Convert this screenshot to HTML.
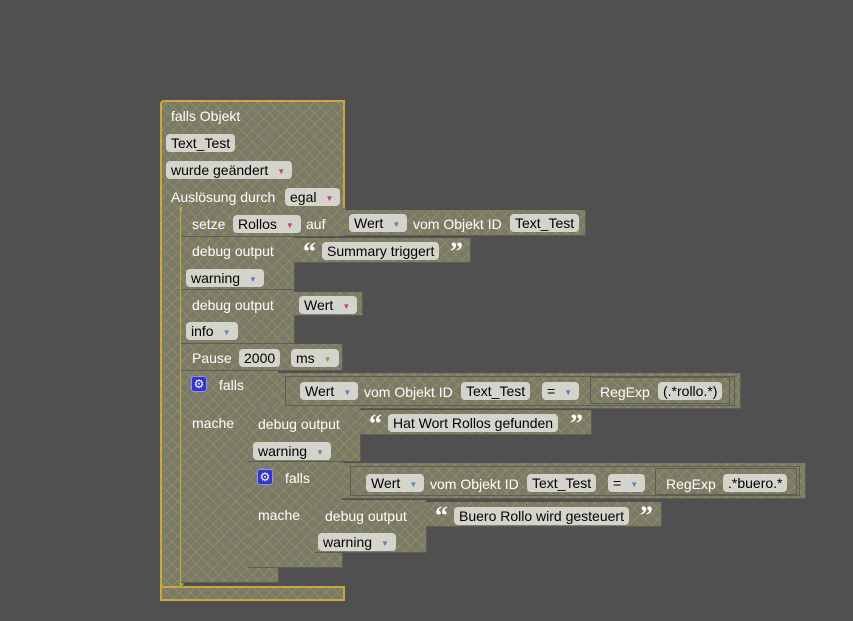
<!DOCTYPE html>
<html><head><meta charset="utf-8"><style>
body{margin:0;width:853px;height:621px;background:#505050;position:relative;overflow:hidden;font-family:"Liberation Sans",sans-serif;font-size:14px}
.b{position:absolute;background-color:#7a7a6c;background-image:repeating-linear-gradient(45deg,rgba(170,160,60,.45) 0 1px,transparent 1px 8px),repeating-linear-gradient(-45deg,rgba(170,160,60,.45) 0 1px,transparent 1px 8px);box-sizing:border-box}
.s{box-shadow:inset 0 -1px 0 #5e5d50,inset -1px 0 0 #5e5d50}
.y{border:2px solid #c9a83c}
.t{position:absolute;color:#fff;white-space:nowrap;line-height:16px}
.f{position:absolute;background:#d5d4cc;color:#000;border-radius:4px;height:18px;line-height:18px;padding:0 5px;white-space:nowrap;box-sizing:border-box}
.a{font-size:8px;margin-left:9px;margin-right:2px;vertical-align:1px}
.p{color:#c2407c}.bl{color:#5a82b8}.g{color:#8a9a40}
.q{position:absolute;color:#fff;font-size:26px;font-weight:bold;font-family:"Liberation Serif",serif;line-height:18px}
.gear{position:absolute;width:16px;height:16px;background:#3535c8;border:1px solid #9090ff;border-radius:3px;box-sizing:border-box;color:#fff;font-size:12px;line-height:14px;text-align:center}
.sl{position:absolute;border:1px solid #5e5d50;box-sizing:border-box}
</style></head><body>
<div class="b y" style="left:160px;top:100px;width:185px;height:110px;border-bottom:none;border-radius:4px 0 0 0"></div>
<div class="b y" style="left:160px;top:200px;width:22px;height:400px;border-right:none;border-top:none;border-bottom:none"></div>
<div class="b y" style="left:160px;top:586px;width:185px;height:15px;border-top-color:#c9a83c"></div>
<div class="t" style="left:171px;top:108px">falls Objekt</div>
<div class="f" style="left:166px;top:134px">Text_Test</div>
<div class="f" style="left:166px;top:161px">wurde geändert<span class="a p">▼</span></div>
<div class="t" style="left:171px;top:189px">Auslösung durch</div>
<div class="f" style="left:285px;top:188px">egal<span class="a p">▼</span></div>
<div class="b" style="left:180px;top:207px;width:4px;height:380px;border-left:2px solid #c9a83c"></div>

<div class="b s" style="left:181px;top:208px;width:165px;height:29px;border-radius:6px 0 0 0"></div>
<div class="t" style="left:192px;top:216px">setze</div>
<div class="f" style="left:233px;top:215px">Rollos<span class="a p">▼</span></div>
<div class="t" style="left:306px;top:216px">auf</div>
<div class="b s" style="left:344px;top:210px;width:242px;height:26px"></div>
<div class="f" style="left:349px;top:214px">Wert<span class="a bl">▼</span></div>
<div class="t" style="left:413px;top:216px">vom Objekt ID</div>
<div class="f" style="left:510px;top:214px">Text_Test</div>

<div class="b s" style="left:181px;top:237px;width:114px;height:53px"></div>
<div class="t" style="left:192px;top:243px">debug output</div>
<div class="b s" style="left:294px;top:238px;width:177px;height:25px"></div>
<div class="q" style="left:303px;top:243px">“</div>
<div class="f" style="left:322px;top:242px">Summary triggert</div>
<div class="q" style="left:450px;top:243px">”</div>
<div class="f" style="left:186px;top:269px">warning<span class="a bl">▼</span></div>

<div class="b s" style="left:181px;top:290px;width:114px;height:54px"></div>
<div class="t" style="left:192px;top:297px">debug output</div>
<div class="b s" style="left:294px;top:292px;width:69px;height:24px"></div>
<div class="f" style="left:299px;top:296px">Wert<span class="a p">▼</span></div>
<div class="f" style="left:186px;top:322px">info<span class="a bl">▼</span></div>

<div class="b s" style="left:181px;top:344px;width:162px;height:27px"></div>
<div class="t" style="left:192px;top:350px">Pause</div>
<div class="f" style="left:239px;top:349px">2000</div>
<div class="f" style="left:291px;top:349px">ms<span class="a g">▼</span></div>

<div class="b s" style="left:181px;top:371px;width:98px;height:212px"></div>
<div class="b s" style="left:278px;top:373px;width:463px;height:36px"></div>
<div class="sl" style="left:285px;top:376px;width:450px;height:30px"></div>
<div class="gear" style="left:191px;top:376px">⚙</div>
<div class="t" style="left:219px;top:377px">falls</div>
<div class="f" style="left:300px;top:382px">Wert<span class="a bl">▼</span></div>
<div class="t" style="left:364px;top:384px">vom Objekt ID</div>
<div class="f" style="left:461px;top:382px">Text_Test</div>
<div class="f" style="left:542px;top:382px">=<span class="a bl">▼</span></div>
<div class="sl" style="left:590px;top:377px;width:140px;height:27px"></div>
<div class="t" style="left:600px;top:384px">RegExp</div>
<div class="f" style="left:658px;top:382px">(.*rollo.*)</div>
<div class="t" style="left:192px;top:415px">mache</div>

<div class="b s" style="left:248px;top:408px;width:113px;height:54px;border-radius:6px 0 0 0"></div>
<div class="t" style="left:258px;top:416px">debug output</div>
<div class="b s" style="left:360px;top:410px;width:232px;height:25px"></div>
<div class="q" style="left:369px;top:415px">“</div>
<div class="f" style="left:388px;top:414px">Hat Wort Rollos gefunden</div>
<div class="q" style="left:570px;top:415px">”</div>
<div class="f" style="left:253px;top:442px">warning<span class="a bl">▼</span></div>

<div class="b s" style="left:248px;top:462px;width:95px;height:106px"></div>
<div class="b s" style="left:342px;top:463px;width:464px;height:36px"></div>
<div class="sl" style="left:350px;top:466px;width:450px;height:30px"></div>
<div class="gear" style="left:257px;top:469px">⚙</div>
<div class="t" style="left:285px;top:470px">falls</div>
<div class="f" style="left:366px;top:474px">Wert<span class="a bl">▼</span></div>
<div class="t" style="left:430px;top:476px">vom Objekt ID</div>
<div class="f" style="left:527px;top:474px">Text_Test</div>
<div class="f" style="left:608px;top:474px">=<span class="a bl">▼</span></div>
<div class="sl" style="left:655px;top:468px;width:142px;height:27px"></div>
<div class="t" style="left:666px;top:476px">RegExp</div>
<div class="f" style="left:723px;top:474px">.*buero.*</div>
<div class="t" style="left:258px;top:507px">mache</div>

<div class="b s" style="left:315px;top:500px;width:112px;height:53px;border-radius:6px 0 0 0"></div>
<div class="t" style="left:325px;top:508px">debug output</div>
<div class="b s" style="left:426px;top:502px;width:236px;height:25px"></div>
<div class="q" style="left:435px;top:507px">“</div>
<div class="f" style="left:454px;top:507px">Buero Rollo wird gesteuert</div>
<div class="q" style="left:640px;top:507px">”</div>
<div class="f" style="left:318px;top:533px">warning<span class="a bl">▼</span></div>
</body></html>
